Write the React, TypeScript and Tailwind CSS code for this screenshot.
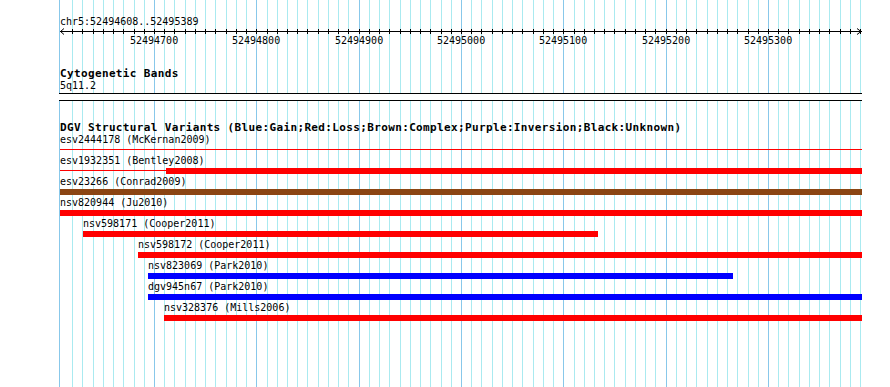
import React from "react";

const LEFT = 59;
const RIGHT = 862;

type Variant = {
  label: string;
  start: number;
  end: number;
  color: string;
  thinFrom?: number;
};

const variants: Variant[] = [
  { label: "esv2444178 (McKernan2009)", start: 60, end: 60, color: "#ff0000", thinFrom: 60 },
  { label: "esv1932351 (Bentley2008)", start: 166, end: 862, color: "#ff0000", thinFrom: 60 },
  { label: "esv23266 (Conrad2009)", start: 60, end: 862, color: "#8b4513" },
  { label: "nsv820944 (Ju2010)", start: 60, end: 862, color: "#ff0000" },
  { label: "nsv598171 (Cooper2011)", start: 83, end: 598, color: "#ff0000" },
  { label: "nsv598172 (Cooper2011)", start: 138, end: 862, color: "#ff0000" },
  { label: "nsv823069 (Park2010)", start: 148, end: 733, color: "#0000ff" },
  { label: "dgv945n67 (Park2010)", start: 148, end: 862, color: "#0000ff" },
  { label: "nsv328376 (Mills2006)", start: 164, end: 862, color: "#ff0000" },
];

const guides: { x: number; major: boolean }[] = [];
for (let k = -8; k <= 69; k++) {
  guides.push({ x: Math.round(154 + k * 10.233), major: k % 10 === 0 });
}

const majors = [
  { x: 154, label: "52494700" },
  { x: 256, label: "52494800" },
  { x: 359, label: "52494900" },
  { x: 461, label: "52495000" },
  { x: 563, label: "52495100" },
  { x: 666, label: "52495200" },
  { x: 768, label: "52495300" },
];

const LIGHT = "#aaeaf0";
const DARK = "#88c8ea";

function Guides() {
  const segs = [
    [0, 93],
    [101, 387],
  ];
  return (
    <svg className="absolute left-0 top-0" width={890} height={387}>
      {segs.map(([y1, y2], i) => (
        <g key={i}>
          <line x1={LEFT + 0.5} x2={LEFT + 0.5} y1={y1} y2={y2} stroke={DARK} strokeWidth={1} />
          {guides.map((g) => (
            <line
              key={g.x}
              x1={g.x + 0.5}
              x2={g.x + 0.5}
              y1={y1}
              y2={y2}
              stroke={g.major ? DARK : LIGHT}
              strokeWidth={1}
            />
          ))}
        </g>
      ))}
    </svg>
  );
}

function Axis() {
  return (
    <svg width={803} height={9} className="block">
      <line x1={1} x2={803} y1={4.5} y2={4.5} stroke="#000" strokeWidth={1} />
      {guides.map((g) => (
        <line
          key={g.x}
          x1={g.x - LEFT + 0.5}
          x2={g.x - LEFT + 0.5}
          y1={2}
          y2={7}
          stroke="#000"
          strokeWidth={1}
        />
      ))}
      <polyline points="5,1.5 1.5,4.5 5,7.5" fill="none" stroke="#000" strokeWidth={1} />
      <polyline points="798,1.5 802,4.5 798,7.5" fill="none" stroke="#000" strokeWidth={1} />
    </svg>
  );
}

function VariantRow({ v }: { v: Variant }) {
  const thinStart = v.thinFrom ?? v.start;
  const thinEnd = v.thinFrom !== undefined ? (v.end === v.start ? RIGHT : v.start) : v.start;
  return (
    <div className="h-[21px] flex flex-col">
      <div
        className="h-[10px] leading-[10px] text-[10px] whitespace-nowrap"
        style={{ paddingLeft: v.thinFrom !== undefined ? 1 : v.start - LEFT }}
      >
        {v.label}
      </div>
      <div className="relative mt-[2px] h-[6px]">
        {v.thinFrom !== undefined && (
          <div
            className="absolute top-[2px] h-px"
            style={{ left: thinStart - LEFT, width: thinEnd - thinStart, background: v.color }}
          />
        )}
        {v.end > v.start && (
          <div
            className="absolute top-0 h-[6px]"
            style={{ left: v.start - LEFT, width: v.end - v.start, background: v.color }}
          />
        )}
      </div>
    </div>
  );
}

export default function App() {
  return (
    <div
      className="relative w-[890px] h-[387px] bg-white overflow-hidden text-black"
      style={{ fontFamily: '"DejaVu Sans Mono", "Liberation Mono", monospace' }}
    >
      <Guides />
      <div className="relative ml-[59px] w-[803px] flex flex-col pt-[17px]">
        <div className="h-[10px] leading-[10px] text-[10px] pl-px whitespace-nowrap">
          chr5:52494608..52495389
        </div>
        <Axis />
        <div className="relative h-[10px]">
          {majors.map((m) => (
            <span
              key={m.x}
              className="absolute top-0 text-[10px] leading-[10px] whitespace-nowrap"
              style={{ left: m.x - LEFT - 24 }}
            >
              {m.label}
            </span>
          ))}
        </div>
        <div className="mt-[22px] h-[11px] leading-[11px] text-[11px] font-bold tracking-[0.36px] pl-px whitespace-nowrap">
          Cytogenetic Bands
        </div>
        <div className="mt-[2px] h-[10px] leading-[10px] text-[10px] pl-px whitespace-nowrap">
          5q11.2
        </div>
        <div className="mt-[2px] h-px bg-black" />
        <div className="mt-[6px] h-px bg-black" />
        <div className="mt-[21px] h-[11px] leading-[11px] text-[11px] font-bold tracking-[0.36px] pl-px whitespace-nowrap">
          DGV Structural Variants (Blue:Gain;Red:Loss;Brown:Complex;Purple:Inversion;Black:Unknown)
        </div>
        <div className="mt-[2px] flex flex-col">
          {variants.map((v) => (
            <VariantRow key={v.label} v={v} />
          ))}
        </div>
      </div>
    </div>
  );
}
